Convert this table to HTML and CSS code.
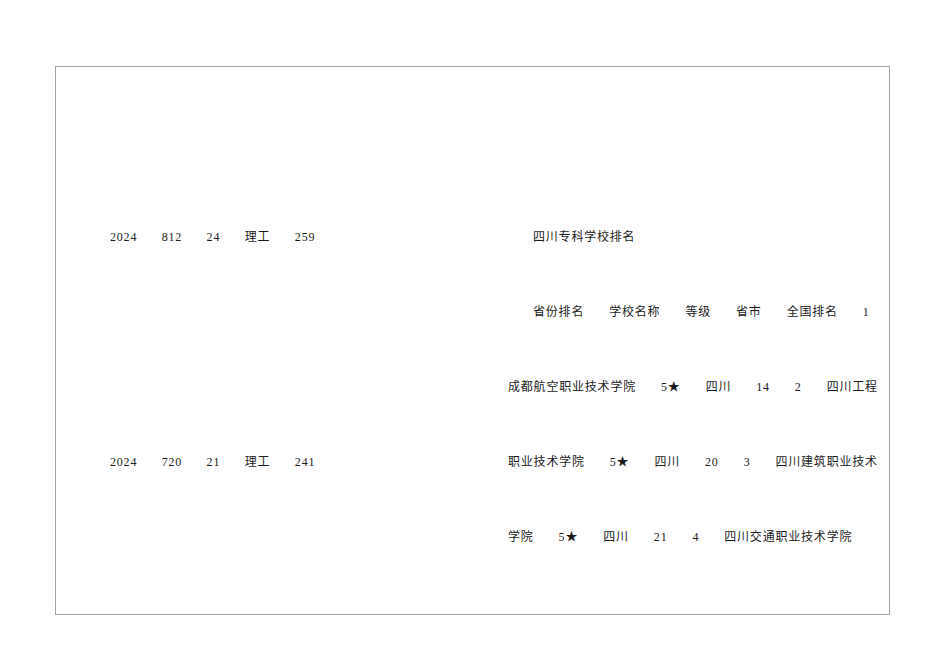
FILE: index.html
```html
<!DOCTYPE html>
<html lang="zh">
<head>
<meta charset="utf-8">
<title>四川专科学校排名</title>
<link rel="stylesheet" href="styles.css">
</head>
<body>
<div class="page">
  <div class="frame">
    <div class="col-left">
      <div class="line"><span>2024</span><span>812</span><span>24</span><span>理工</span><span>259</span></div>
      <div class="line"></div>
      <div class="line"></div>
      <div class="line"><span>2024</span><span>720</span><span>21</span><span>理工</span><span>241</span></div>
    </div>
    <div class="col-right">
      <div class="line indent"><span>四川专科学校排名</span></div>
      <div class="line indent"><span>省份排名</span><span>学校名称</span><span>等级</span><span>省市</span><span>全国排名</span><span>1</span></div>
      <div class="line"><span>成都航空职业技术学院</span><span>5★</span><span>四川</span><span>14</span><span>2</span><span>四川工程</span></div>
      <div class="line"><span>职业技术学院</span><span>5★</span><span>四川</span><span>20</span><span>3</span><span>四川建筑职业技术</span></div>
      <div class="line"><span>学院</span><span>5★</span><span>四川</span><span>21</span><span>4</span><span>四川交通职业技术学院</span></div>
    </div>
  </div>
</div>
</body>
</html>
```

FILE: styles.css
```css
html, body {
  margin: 0;
  padding: 0;
  background: #fff;
}

body {
  font-family: "Liberation Serif", "Noto Sans CJK SC", serif;
  font-size: 12px;
  color: #1c1c1c;
  letter-spacing: 0.8px;
}

.page {
  padding: 66px 0 0 55px;
}

.frame {
  box-sizing: border-box;
  width: 835px;
  height: 549px;
  border: 1px solid #a4a4a4;
  display: flex;
  padding-top: 133px;
}

.col-left {
  box-sizing: border-box;
  width: 452px;
  padding-left: 54px;
}

.col-left .line {
  gap: 24.5px;
}

.col-right {
  flex: 1;
}

.line {
  height: 75px;
  line-height: 75px;
  display: flex;
  align-items: baseline;
  gap: 25px;
  white-space: nowrap;
}

.indent {
  padding-left: 25px;
}
```
